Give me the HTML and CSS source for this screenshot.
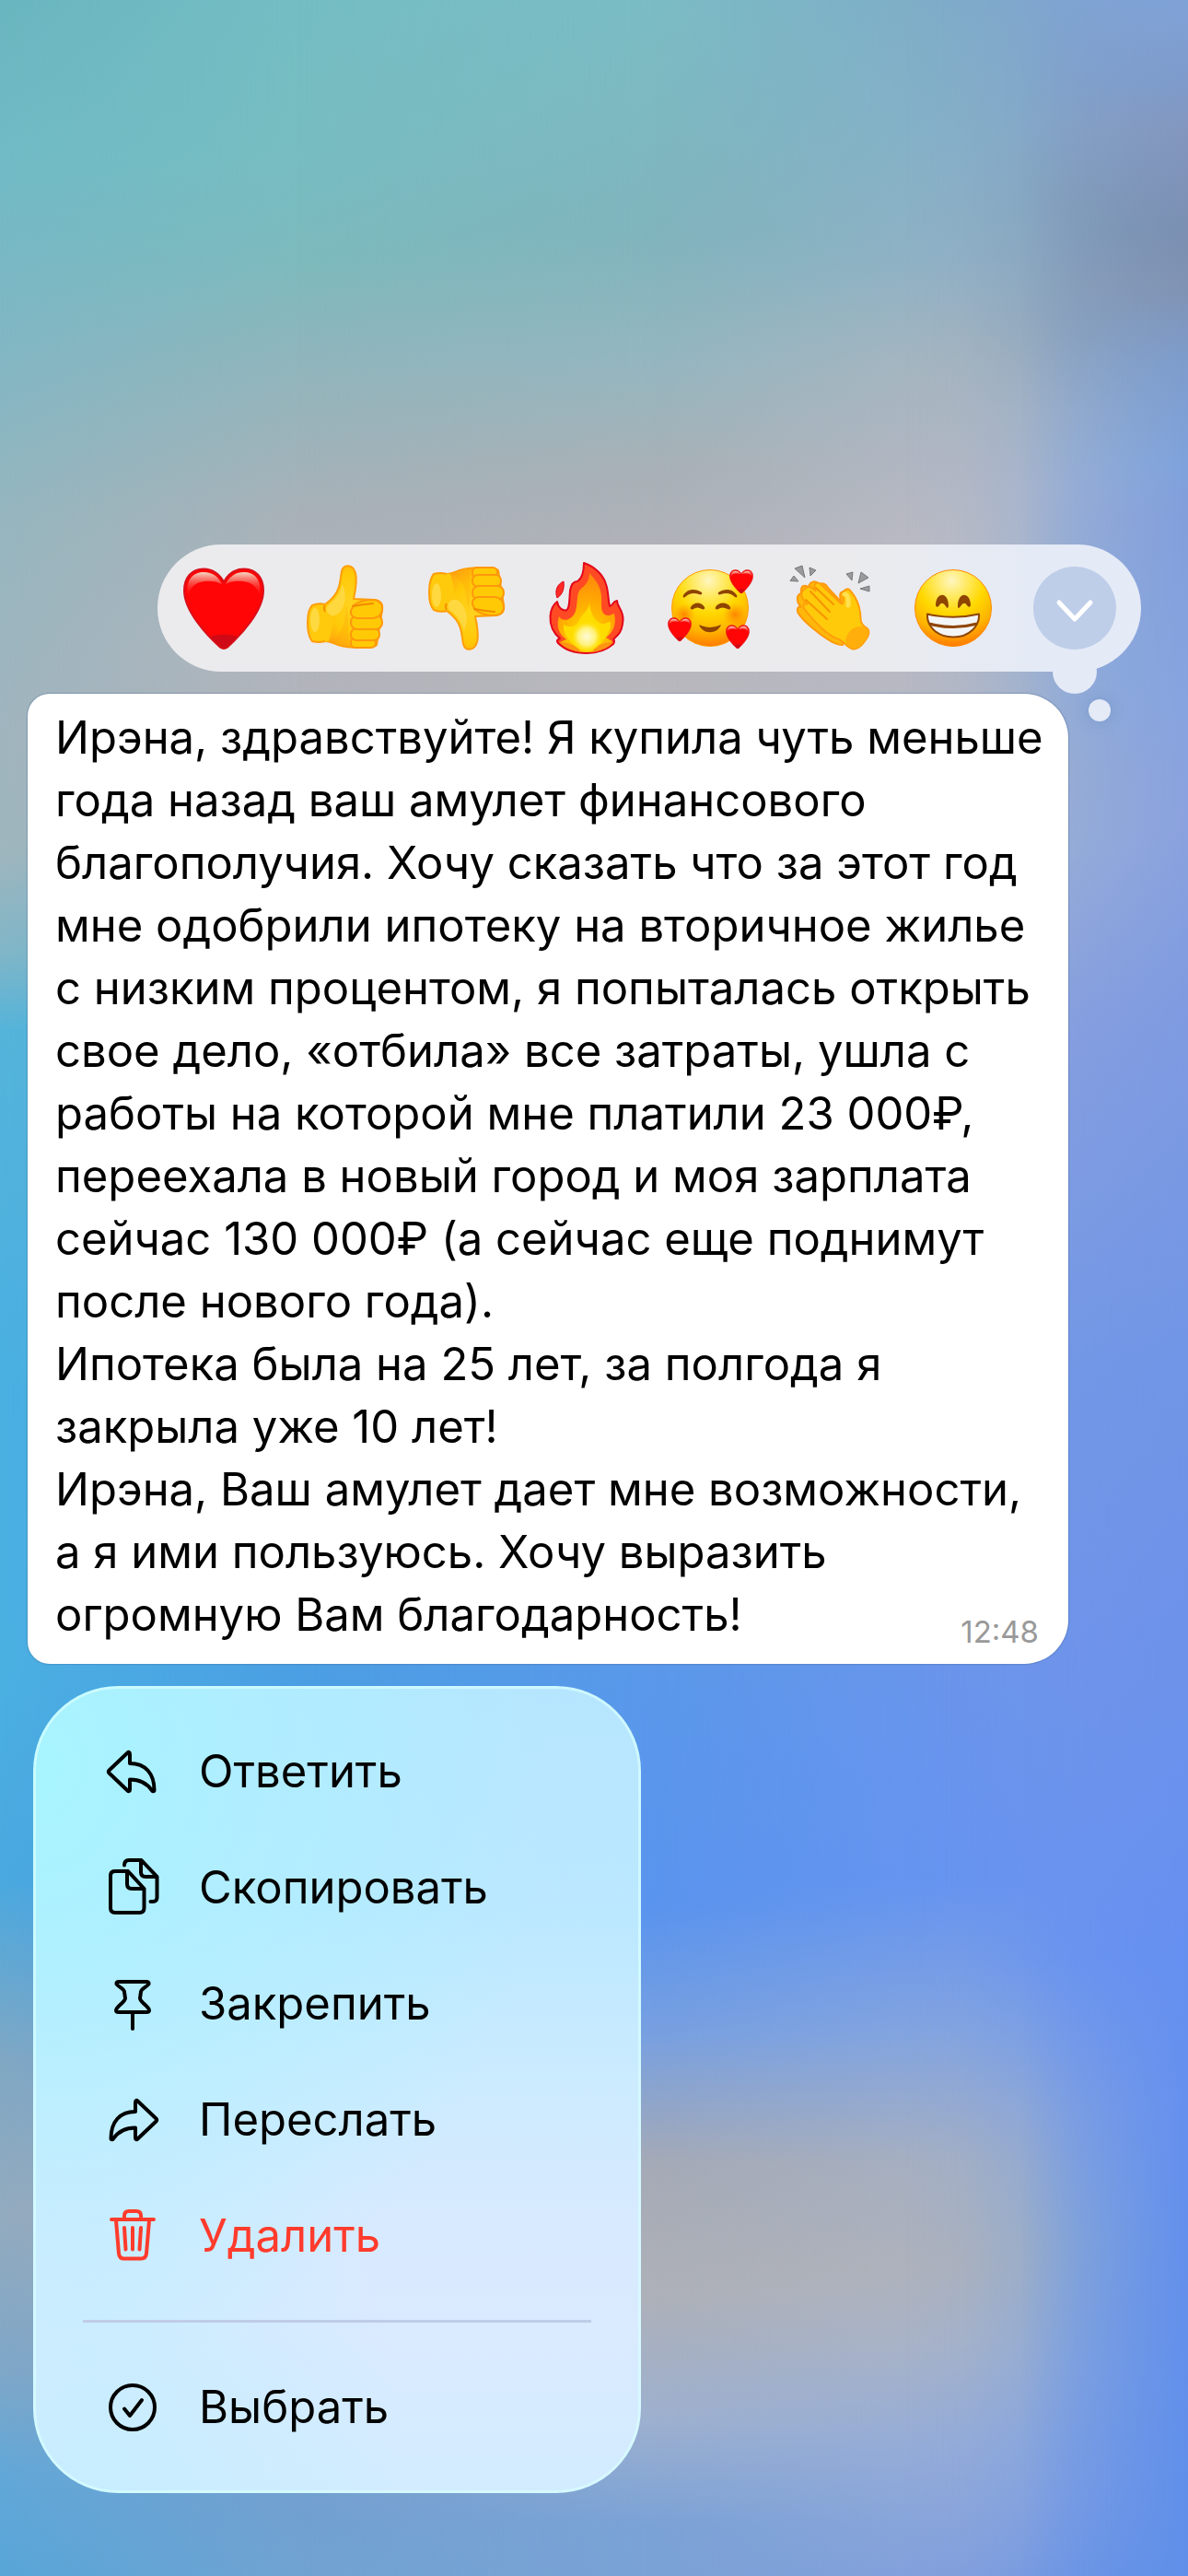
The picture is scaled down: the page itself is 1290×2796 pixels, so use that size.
FILE: index.html
```html
<!DOCTYPE html>
<html lang="ru">
<head>
  <meta charset="UTF-8">
  <meta name="viewport" content="width=device-width, initial-scale=1">
  <title>Сообщение</title>
  <link rel="stylesheet" href="styles.css">
</head>
<body>
  <!-- Shared gradients and shapes -->
  <svg class="defs" width="0" height="0" aria-hidden="true">
    <defs>
      <linearGradient id="heartShine" x1="0" y1="0" x2="0" y2="1">
        <stop offset="0" stop-color="#f3d9c4"/>
        <stop offset="1" stop-color="#ff1a1a" stop-opacity="0"/>
      </linearGradient>
      <radialGradient id="hand" cx="0.45" cy="0.45" r="0.6">
        <stop offset="0" stop-color="#ffd21f"/>
        <stop offset="0.6" stop-color="#ffc908"/>
        <stop offset="1" stop-color="#ffa60f"/>
      </radialGradient>
      <radialGradient id="face" cx="0.48" cy="0.14" r="0.86">
        <stop offset="0" stop-color="#fff6c0"/>
        <stop offset="0.25" stop-color="#ffe95e"/>
        <stop offset="0.5" stop-color="#ffd800"/>
        <stop offset="0.78" stop-color="#ffb300"/>
        <stop offset="1" stop-color="#ff7a00"/>
      </radialGradient>
      <radialGradient id="cheek">
        <stop offset="0" stop-color="#ff6a00" stop-opacity="0.7"/>
        <stop offset="1" stop-color="#ff8a00" stop-opacity="0"/>
      </radialGradient>
      <radialGradient id="flameIn" cx="0.5" cy="0.85" r="0.8">
        <stop offset="0" stop-color="#ffe000"/>
        <stop offset="0.5" stop-color="#ffb500"/>
        <stop offset="1" stop-color="#ff8a0a"/>
      </radialGradient>
      <radialGradient id="glow">
        <stop offset="0" stop-color="#fffbd8"/>
        <stop offset="0.6" stop-color="#fff27a"/>
        <stop offset="1" stop-color="#ffe000" stop-opacity="0.4"/>
      </radialGradient>
      <symbol id="heart" viewBox="0 0 96 96">
        <path d="M48 19.500C42 9 34 5.500 26 5.500C13 5.500 5 15 5 29C5 51 29 77 44 90.500Q48 93.500 52 90.500C67 77 91 51 91 29C91 15 83 5.500 70 5.500C62 5.500 54 9 48 19.500Z" fill="#ff0505" stroke="#d8101a" stroke-width="2"/>
        <path d="M33 79Q48 74 63 79L52 90Q48 93 44 90Z" fill="#cf0a16"/>
        <path d="M9 36C6 18 14 9 26 9C36 9 42 14 46 22C40 19 34 18 27 19C16 20 11 27 9 36Z" fill="url(#heartShine)"/>
        <path d="M87 36C90 18 82 9 70 9C60 9 54 14 50 22C56 19 62 18 69 19C80 20 85 27 87 36Z" fill="url(#heartShine)"/>
      </symbol>
      <symbol id="thumb" viewBox="0 0 96 96">
        <path d="M26 44C33 39 39 32 41 25C43 18 43 13 44 8C46 0 56 0 59 10C61 18 59 29 57 38L80 39C86 40 89 44 88 50L82 88C80 91 72 91 66 91C56 91 48 91 40 88C35 86 31 84 26 84Z" fill="url(#hand)" stroke="#ff9d0a" stroke-width="2" stroke-linejoin="round"/>
        <path d="M12 45Q19 42 26 44Q32 46 36 52Q34 74 30 84Q20 86 12 84Q7 78 7 64Q7 50 12 45Z" fill="#ffc90c"/>
        <path d="M26 44Q19 42 12 45Q7 50 7 64Q7 78 12 84Q19 86 26 84" fill="none" stroke="#ff9d0a" stroke-width="2"/>
        <ellipse cx="15" cy="61" rx="5" ry="13" fill="#ffd940"/>
        <path d="M28 52Q27 47 30 44C38 39 43 30 45 22Q50 36 46 45C42 56 33 60 28 52Z" fill="#ffd840"/>
        <path d="M26 45Q24 48 26 52" fill="none" stroke="#f58f00" stroke-width="2"/>
        <g fill="#ffc906" stroke="#ff980c" stroke-width="2">
          <rect x="54" y="80" width="27" height="11" rx="5"/>
          <rect x="54" y="70" width="31" height="13" rx="6"/>
          <rect x="54" y="56" width="34" height="15" rx="7"/>
          <path d="M57 45Q65 39 78 39Q88 40 88 48Q88 58 78 59L60 59Q53 57 54 51Z"/>
        </g>
        <path d="M56 46Q66 44 78 43" fill="none" stroke="#f08a00" stroke-width="2" stroke-linecap="round"/>
        <path d="M49 46Q52 56 51 88Q38 87 31 83Q47 80 49 46Z" fill="#ff9d0a" opacity="0.25"/>
      </symbol>
    </defs>
  </svg>

  <!-- Blurred chat background, one layer per colour column -->
  <div class="wallpaper" aria-hidden="true">
    <div class="tone tone-1"></div>
    <div class="tone tone-2"></div>
    <div class="tone tone-3"></div>
    <div class="tone tone-4"></div>
    <div class="tone tone-5"></div>
    <div class="tone tone-6"></div>
  </div>

  <main class="overlay">
    <!-- Reactions -->
    <div class="reactions">
      <button type="button" class="reaction" aria-label="Сердце">
        <svg viewBox="0 0 96 96"><use href="#heart"/></svg>
      </button>
      <button type="button" class="reaction" aria-label="Нравится">
        <svg viewBox="0 0 96 96"><use href="#thumb"/></svg>
      </button>
      <button type="button" class="reaction" aria-label="Не нравится">
        <svg viewBox="0 0 96 96"><g transform="matrix(1 0 0 -1 0 95)"><use href="#thumb"/></g></svg>
      </button>
      <button type="button" class="reaction" aria-label="Огонь">
        <svg viewBox="0 0 96 96">
          <path d="M43 -1C55 3 64 12 67 22C70 31 69 38 71 46C74 46 74 41 79 40C79 47 86 50 85.500 61C85 69 83 74 80 77L75 82Q77 84 75 87C67 94 56 97 46 97C34 97 22 93 15 86Q13 84 15 82L17 81C10 75 6 67 6.500 57C7 49 10 44 14 41C15 48 20 51 24 50.500C28 48 27 39 28 29C29 23 31 19 36 19C41 16 43 9 43 -1Z" fill="#ff4a24" stroke="#e3061b" stroke-width="2" stroke-linejoin="round"/>
          <path d="M21 19C14 22 11 29 14 37C20 33 22 27 21 19Z" fill="#ff2a24" stroke="#d9061b"/>
          <path d="M49 10C61 22 63 32 62 44C62 53 65 56 70 56C74 55 75 54 76 54C79 66 74 75 67 80L74 84C66 93 56 96 46 96C35 96 24 92 17 85L24 82C15 76 13 67 16 57C20 64 31 61 34 51C37 40 34 31 41 26C46 22 49 17 49 10Z" fill="url(#flameIn)"/>
          <path d="M49 42C50 55 56 64 63 65C68 66 70 61 72 64C73 75 63 83 58 91Q46 97 34 91C28 83 20 77 21 66C29 70 35 68 38 61C41 54 48 52 49 42Z" fill="#ffdc00"/>
          <path d="M16 85Q31 84 41 96Q24 94 16 85Z" fill="#ff9414"/>
          <path d="M75 85Q60 84 51 96Q68 94 75 85Z" fill="#ff9414"/>
          <circle cx="46" cy="79" r="16" fill="url(#glow)"/>
        </svg>
      </button>
      <button type="button" class="reaction" aria-label="Влюблённость">
        <svg viewBox="0 0 96 96">
          <circle cx="48" cy="48" r="41.500" fill="url(#face)" stroke="#ff9a00"/>
          <circle cx="20" cy="55" r="12" fill="url(#cheek)"/>
          <circle cx="75" cy="55" r="13" fill="url(#cheek)"/>
          <g fill="#8f4400">
            <path d="M19 34C23 27 32 26 39 31C40 33 38 34 36 33C30 31 25 32 21 36C19 37 18 36 19 34Z"/>
            <path d="M77 34C73 27 64 26 57 31C56 33 58 34 60 33C66 31 71 32 75 36C77 37 78 36 77 34Z"/>
            <path d="M27 47C30 41 39 41 42 47C43 49 41 50 39 49Q34 46 30 49C28 50 26 49 27 47Z"/>
            <path d="M54 47C57 41 67 41 70 47C71 49 69 50 67 49Q61 46 57 49C55 50 53 49 54 47Z"/>
            <path d="M36 66C40 77 56 77 60 66Q48 72 36 66Z"/>
          </g>
          <use href="#heart" x="68" y="5" width="28" height="28"/>
          <use href="#heart" x="1" y="57" width="28" height="28"/>
          <use href="#heart" x="64" y="65" width="28" height="28"/>
        </svg>
      </button>
      <button type="button" class="reaction" aria-label="Аплодисменты">
        <svg viewBox="0 0 96 96">
          <g fill="#9a9a9c" stroke="#77787a" stroke-width="1" stroke-linejoin="round">
            <path d="M3 18.500L7 13L12 19Z"/>
            <path d="M8 5L16 2L19 15Z"/>
            <path d="M24 4L31 7L25 13Z"/>
            <path d="M64 11L71 9L70 18Z"/>
            <path d="M80 9L88 15L77 21Z"/>
            <path d="M79 27L89 24V30Z"/>
          </g>
          <path d="M15 32C14 24 18 22 23 25C25 18 31 18 34 22C38 20 42 22 44 26L58 41C57 34 56 31 61 30C66 29 70 34 70 45L60 88C50 88 43 81 38 78C29 71 16 62 11 52C10 48 12 46 15 47C10 42 9 34 15 32Z" fill="#ffb80a" stroke="#ff980c" stroke-width="2"/>
          <path d="M19 27C22 23 28 26 31 30C27 23 31 18 36 22L58 43C62 45 61 37 60 33C61 28 66 25 69 30C74 36 78 44 79 53C80 60 78 64 85 69C91 72 88 79 84 84C80 90 74 94 70 92C64 90 61 84 56 82C45 79 30 64 20 51C15 45 18 42 22 44C13 36 14 31 19 27Z" fill="#ffca0a" stroke="#ff9d0c" stroke-width="2"/>
          <path d="M25 30L46 52M20 39L43 60M31 26L50 44" fill="none" stroke="#f79400" stroke-width="2" stroke-linecap="round"/>
          <path d="M64 80C67 71 75 67 82 68C91 71 88 79 84 84C79 91 73 94 68 91C64 87 62 84 64 80Z" fill="#ffae0c"/>
          <path d="M62 33Q67 33 66 45" fill="none" stroke="#ffe04f" stroke-width="5" stroke-linecap="round"/>
        </svg>
      </button>
      <button type="button" class="reaction" aria-label="Улыбка">
        <svg viewBox="0 0 96 96">
          <circle cx="48" cy="48" r="41.500" fill="url(#face)" stroke="#ff8a00"/>
          <path d="M29 44C30 30 43 30 43 46C42 49 41 48 40 46Q36 40 33 45C31 48 29 47 29 44Z" fill="#8f4400"/>
          <path d="M53 46C53 30 66 30 67 44C67 47 65 48 63 45Q60 40 56 46C55 48 53 49 53 46Z" fill="#8f4400"/>
          <path d="M20 54.500Q48 61 76 54.500C77 67 66 79.500 48 79.500C30 79.500 19 67 20 54.500Z" fill="#f4f5f6" stroke="#8f4400" stroke-width="2" stroke-linejoin="round"/>
          <path d="M22 65Q48 72 74 65" fill="none" stroke="#8f4400" stroke-width="3"/>
        </svg>
      </button>
      <button type="button" class="more" aria-label="Ещё реакции">
        <svg viewBox="0 0 90 90"><path d="M28 39L45 57L62 39"/></svg>
      </button>
    </div>

    <!-- Message -->
    <article class="message">
      <p>Ирэна, здравствуйте! Я купила чуть меньше<br>
      года назад ваш амулет финансового<br>
      благополучия. Хочу сказать что за этот год<br>
      мне одобрили ипотеку на вторичное жилье<br>
      с низким процентом, я попыталась открыть<br>
      свое дело, «отбила» все затраты, ушла с<br>
      работы на которой мне платили 23 000₽,<br>
      переехала в новый город и моя зарплата<br>
      сейчас 130 000₽ (а сейчас еще поднимут<br>
      после нового года).</p>
      <p>Ипотека была на 25 лет, за полгода я<br>
      закрыла уже 10 лет!</p>
      <p>Ирэна, Ваш амулет дает мне возможности,<br>
      а я ими пользуюсь. Хочу выразить<br>
      огромную Вам благодарность!</p>
      <time class="message-time" datetime="12:48">12:48</time>
    </article>

    <!-- Context menu -->
    <div class="menu">
      <button type="button" class="menu-item">
        <svg class="icon" viewBox="0 0 64 64"><path d="M29 13V23C46 23 55.500 34 55.500 52C55.500 53.500 54 53.500 53 52.500C48 45 41 40.500 29 40.500V51.500C29 53.500 27.500 53.500 26.500 52.500L6.500 33.500Q5 32 6.500 30.500L26.500 11.500C27.500 10.500 29 10.500 29 13Z"/></svg>
        Ответить
      </button>
      <button type="button" class="menu-item">
        <svg class="icon" viewBox="0 0 64 64"><path d="M27 14H13Q8 14 8 19V54Q8 59 13 59H39.500Q44.500 59 44.500 54V33ZM27 14L44.500 33H31Q26 33 26 28V14M23 7.500Q23 2 28 2H41.500L58.500 20V42.500Q58.500 47 54 47H51.500M41 2V15Q41 20 46 20H58.500"/></svg>
        Скопировать
      </button>
      <button type="button" class="menu-item">
        <svg class="icon" viewBox="0 0 64 64"><path d="M17 8H47Q50 8 49.500 10.500C47.500 13.500 41 15.500 41 19L40 26C40 30 50 35 50 39Q50 41 47 41H17Q14 41 14 39C14 35 24 30 24 26L23 19C23 15.500 16.500 13.500 14.500 10.500Q14 8 17 8ZM32 41V59"/></svg>
        Закрепить
      </button>
      <button type="button" class="menu-item">
        <svg class="icon" viewBox="0 0 64 64"><path d="M35 13V23C18 23 8.500 34 8.500 52C8.500 53.500 10 53.500 11 52.500C16 45 23 40.500 35 40.500V51.500C35 53.500 36.500 53.500 37.500 52.500L57.500 33.500Q59 32 57.500 30.500L37.500 11.500C36.500 10.500 35 10.500 35 13Z"/></svg>
        Переслать
      </button>
      <button type="button" class="menu-item danger">
        <svg class="icon" viewBox="0 0 64 64"><path d="M9 14H55M23 14V10Q23 5 28 5H36Q41 5 41 10V14M14 15L17 51Q17.500 56.500 23 56.500H41Q46.500 56.500 47 51L50 15M23 23L24.500 46.500M32 23V46.500M41 23L39.500 46.500"/></svg>
        Удалить
      </button>
      <hr>
      <button type="button" class="menu-item">
        <svg class="icon" viewBox="0 0 64 64"><circle cx="32" cy="32" r="24"/><path d="M23 33.500L29 41L42 24"/></svg>
        Выбрать
      </button>
    </div>
  </main>
</body>
</html>
```
FILE: styles.css
```css
* {
  box-sizing: border-box;
}
body {
  margin: 0;
  font-family: Inter, "Liberation Sans", sans-serif;
  color: #000;
  background: #6a95e4;
}
button {
  border: none;
  background: none;
  padding: 0;
  font: inherit;
  color: inherit;
  cursor: pointer;
}
.defs {
  position: absolute;
}

/* background */
.wallpaper,
.tone {
  position: absolute;
  inset: 0;
}
.wallpaper {
  z-index: -1;
}
.tone-1 {
  background: linear-gradient(#6ab6c0, #70bbc6 6%, #80b7c4 13%, #96b6bf 20%, #a0b5bf 28%, #9fb6be 33%, #80b6c8 37%, #55b4da 40%, #4ab0e2 54%, #4bb0e2 65%, #4aa9df 73%, #80a8c4 80%, #93abbf 86%, #7fa7c8 92%, #62a8d8 96%, #58a6d8);
}
.tone-2 {
  background: linear-gradient(#74bdc3, #77bdc1 6%, #7cbabd 10%, #90b5bc 14%, #a9b1b8 20%, #b2b5bc 25%, #b0b2b9 30%, #52b2da 40%, #4aaae0 54%, #4b9fe3 65%, #4f98e8 75%, #9fa8b8 86%, #72a0d0 97%, #70a3d2);
  mask-image: linear-gradient(to right, transparent, #000 25%);
}
.tone-3 {
  background: linear-gradient(#7bbcc4, #7db9c1 4%, #80b4bc 9%, #94b6c0 14%, #a7b1b6 18%, #b3b2b9 22%, #bab9be 28%, #8aa8c8 40%, #6a98e8 54%, #5a98ea 65%, #5a94ee 74%, #78a0e0 79%, #a5aab6 84%, #aeb1b8 89%, #9db0cf 94%, #7ba2d6 98%, #7aa2d6);
  mask-image: linear-gradient(to right, transparent 25%, #000 55%);
}
.tone-4 {
  background: linear-gradient(#7facc8, #85b0c8 5%, #90b1c6 10%, #a6b5c0 14%, #b2b7c3 18%, #babbc4 21%, #b5b8c4 28%, #8aa3d8 40%, #7298e8 54%, #6a95ec 65%, #6694f0 73%, #85a5de 79%, #a6b0c2 84%, #aeb2bc 88%, #a8b3c8 91%, #94acd8 95%, #84a0dc);
  mask-image: linear-gradient(to right, transparent 55%, #000 80%);
}
.tone-5 {
  background: linear-gradient(#7fa3d2, #84a2c8 5%, #839fbd 8%, #8ba3bd 13%, #98aeca 16%, #9cb2d4 19%, #8fadd8 26%, #98afd2 30%, #98b0d6 33%, #889fdf 40%, #7298e6 54%, #7095ea 65%, #6a94f0 76%, #83a3e0 82%, #8aaad4 87%, #86a6dc 92%, #7d9ee2 97%, #7098e4);
  mask-image: linear-gradient(to right, transparent 76%, rgba(0, 0, 0, 0.12) 81%, rgba(0, 0, 0, 0.5) 86%, rgba(0, 0, 0, 0.88) 91%, #000 95%);
}
.tone-6 {
  background: linear-gradient(#80a2d6, #7d9bcc 3%, #8397be 5%, #798fb2 9%, #8092b2 11%, #7d9ccc 14%, #7ea2dc 18%, #829edb 20%, #87a3df 27%, #8aa2de 32%, #7f9be0 39%, #7095e6 54%, #6c92ea 65%, #6690f0 75%, #5f8fe8);
  mask-image: linear-gradient(to right, transparent 86%, rgba(0, 0, 0, 0.5) 93%, #000);
}

.overlay {
  position: relative;
  min-height: 100vh;
  display: flex;
  flex-direction: column;
  justify-content: flex-end;
  align-items: flex-start;
  gap: 24px;
  padding-bottom: 90px;
}

/* reactions */
.reactions {
  position: relative;
  align-self: flex-end;
  display: flex;
  align-items: center;
  gap: 36px;
  height: 138px;
  margin-right: 51px;
  padding: 0 24px;
  border-radius: 69px;
  background: linear-gradient(to right, #ebebed 70%, #e4eaf6 90%);
}
.reactions::before,
.reactions::after {
  content: "";
  position: absolute;
  border-radius: 50%;
  background: #e4eaf6;
}
.reactions::before {
  right: 48px;
  bottom: -24px;
  width: 48px;
  height: 48px;
}
.reactions::after {
  right: 33px;
  bottom: -54px;
  width: 24px;
  height: 24px;
  box-shadow: 0 0 15px rgba(80, 120, 170, 0.3);
}
.reaction,
.reaction svg {
  display: block;
  width: 96px;
  height: 96px;
  overflow: visible;
}
.more {
  position: relative;
  width: 90px;
  height: 90px;
  margin: 0 3px;
  border-radius: 50%;
  background: #becee9;
}
.more svg {
  display: block;
  fill: none;
  stroke: #fff;
  stroke-width: 5;
  stroke-linecap: round;
  stroke-linejoin: round;
}

/* message */
.message {
  position: relative;
  align-self: stretch;
  margin: 0 130px 0 30px;
  padding: 14px 8px 19px 30px;
  border-radius: 24px 48px 48px 24px;
  background: #fff;
  box-shadow: 0 0 1px 1px rgba(60, 90, 140, 0.3);
  font-size: 49px;
  line-height: 68px;
}
.message p {
  margin: 0;
}
.message-time {
  position: absolute;
  right: 32px;
  bottom: 15px;
  font-size: 33px;
  line-height: 40px;
  color: #999;
}

/* menu */
.menu {
  width: 660px;
  max-width: 100%;
  margin-left: 36px;
  padding: 30px 0;
  border-radius: 92px;
  background:
    radial-gradient(ellipse at 0 10%, rgba(165, 246, 255, 0.9), rgba(170, 242, 255, 0.6) 25%, rgba(184, 230, 255, 0) 60%),
    radial-gradient(ellipse at 10% 96%, rgba(196, 238, 255, 0.8), rgba(196, 238, 255, 0) 40%),
    linear-gradient(#b6e6ff, #bbe8ff 28%, #cbebff 48%, #d7eaff 65%, #daeaff 80%, #d2ecff);
  box-shadow: inset 0 0 0 3px rgba(215, 255, 255, 0.7);
}
.menu-item {
  display: flex;
  align-items: center;
  gap: 40px;
  width: 100%;
  height: 126px;
  padding-left: 76px;
  font-size: 49px;
  line-height: 60px;
  text-align: left;
}
.menu hr {
  height: 3px;
  margin: 28px 54px 29px;
  border: none;
  background: #bfcce8;
}
.icon {
  width: 64px;
  height: 64px;
  overflow: visible;
  fill: none;
  stroke: currentColor;
  stroke-width: 4;
  stroke-linecap: round;
  stroke-linejoin: round;
}
.danger {
  color: #ff3b2c;
}
```
